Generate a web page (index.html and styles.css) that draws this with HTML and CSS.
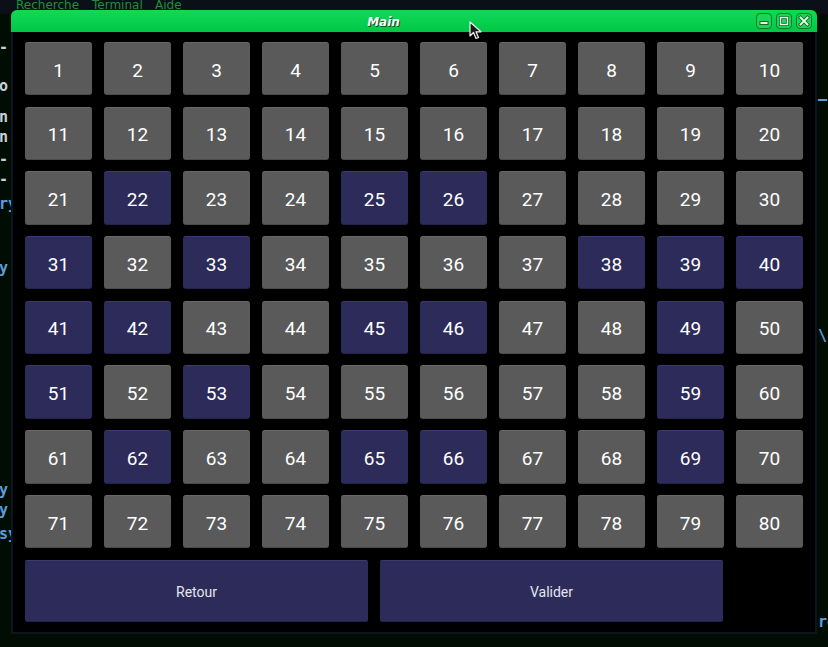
FILE: index.html
```html
<!DOCTYPE html>
<html lang="fr">
<head>
<meta charset="utf-8">
<title>Main</title>
<link rel="stylesheet" href="styles.css">
</head>
<body>
<div class="desktop">
  <div class="term-menu">
    <span class="m1">Recherche</span><span class="m2">Terminal</span><span class="m3">Aide</span>
  </div>
  <div class="term-text">
    <span class="tt w" style="top:38px">-</span>
    <span class="tt w" style="top:77px">o</span>
    <span class="tt w" style="top:108px">n</span>
    <span class="tt w" style="top:128px">n</span>
    <span class="tt w" style="top:150px">-</span>
    <span class="tt w" style="top:170px">-</span>
    <span class="tt b" style="top:195px">ry</span>
    <span class="tt b" style="top:259px">y</span>
    <span class="tt b" style="top:481px">y</span>
    <span class="tt b" style="top:501px">y</span>
    <span class="tt b" style="top:525px">sy</span>
    <span class="tt b right" style="top:90px">—</span>
    <span class="tt b right" style="top:327px">\'</span>
    <span class="tt b right" style="top:613px">ro</span>
  </div>

  <div class="window">
    <div class="titlebar">
      <div class="title">Main</div>
      <div class="wbtns">
        <div class="wbtn"><svg viewBox="0 0 16 16" width="16" height="16"><rect x="4" y="8.5" width="8" height="3" fill="#e8ffe8" stroke="#0b6e2a" stroke-width="1"/></svg></div>
        <div class="wbtn"><svg viewBox="0 0 16 16" width="16" height="16"><rect x="4.5" y="4.5" width="7" height="7" fill="none" stroke="#0b6e2a" stroke-width="3"/><rect x="4.5" y="4.5" width="7" height="7" fill="none" stroke="#e8ffe8" stroke-width="1.4"/></svg></div>
        <div class="wbtn"><svg viewBox="0 0 16 16" width="16" height="16"><path d="M4.5 4.5 L11.5 11.5 M11.5 4.5 L4.5 11.5" stroke="#0b6e2a" stroke-width="3.6" stroke-linecap="square"/><path d="M4.5 4.5 L11.5 11.5 M11.5 4.5 L4.5 11.5" stroke="#e8ffe8" stroke-width="1.8" stroke-linecap="square"/></svg></div>
      </div>
    </div>
    <div class="body">
      <div class="grid">
        <div class="cell">1</div><div class="cell">2</div><div class="cell">3</div><div class="cell">4</div><div class="cell">5</div><div class="cell">6</div><div class="cell">7</div><div class="cell">8</div><div class="cell">9</div><div class="cell">10</div>
        <div class="cell">11</div><div class="cell">12</div><div class="cell">13</div><div class="cell">14</div><div class="cell">15</div><div class="cell">16</div><div class="cell">17</div><div class="cell">18</div><div class="cell">19</div><div class="cell">20</div>
        <div class="cell">21</div><div class="cell sel">22</div><div class="cell">23</div><div class="cell">24</div><div class="cell sel">25</div><div class="cell sel">26</div><div class="cell">27</div><div class="cell">28</div><div class="cell">29</div><div class="cell">30</div>
        <div class="cell sel">31</div><div class="cell">32</div><div class="cell sel">33</div><div class="cell">34</div><div class="cell">35</div><div class="cell">36</div><div class="cell">37</div><div class="cell sel">38</div><div class="cell sel">39</div><div class="cell sel">40</div>
        <div class="cell sel">41</div><div class="cell sel">42</div><div class="cell">43</div><div class="cell">44</div><div class="cell sel">45</div><div class="cell sel">46</div><div class="cell">47</div><div class="cell">48</div><div class="cell sel">49</div><div class="cell">50</div>
        <div class="cell sel">51</div><div class="cell">52</div><div class="cell sel">53</div><div class="cell">54</div><div class="cell">55</div><div class="cell">56</div><div class="cell">57</div><div class="cell">58</div><div class="cell sel">59</div><div class="cell">60</div>
        <div class="cell">61</div><div class="cell sel">62</div><div class="cell">63</div><div class="cell">64</div><div class="cell sel">65</div><div class="cell sel">66</div><div class="cell">67</div><div class="cell">68</div><div class="cell sel">69</div><div class="cell">70</div>
        <div class="cell">71</div><div class="cell">72</div><div class="cell">73</div><div class="cell">74</div><div class="cell">75</div><div class="cell">76</div><div class="cell">77</div><div class="cell">78</div><div class="cell">79</div><div class="cell">80</div>
      </div>
      <div class="actions">
        <div class="action">Retour</div>
        <div class="action">Valider</div>
      </div>
    </div>
  </div>

  <svg class="cursor" width="14" height="20" viewBox="0 0 14 20"><path d="M1 1 L1 15 L4.5 11.5 L7 17.5 L9.5 16.5 L7 10.8 L12 10.8 Z" fill="#1a1a1a" stroke="#f2f2f2" stroke-width="1.2" stroke-linejoin="round"/></svg>
</div>
</body>
</html>
```

FILE: styles.css
```css
html, body {
  margin: 0;
  padding: 0;
}
body {
  width: 828px;
  height: 647px;
  overflow: hidden;
  background: #010d03;
}
.desktop {
  position: relative;
  width: 828px;
  height: 647px;
  background: #010d03;
  font-family: "DejaVu Sans", sans-serif;
}
.term-menu {
  height: 14px;
  background: #0a0f18;
  position: relative;
  font-size: 12px;
  line-height: 14px;
  color: #1e8f3c;
}
.term-menu span {
  position: absolute;
  top: -2px;
}
.m1 { left: 16px; }
.m2 { left: 92px; }
.m3 { left: 155px; }
.term-text .tt {
  position: absolute;
  left: -1px;
  font-family: "DejaVu Sans Mono", monospace;
  font-size: 15px;
  font-weight: bold;
  line-height: 18px;
}
.term-text .tt.right { left: 818px; }
.tt.w { color: #c8d0d8; }
.tt.b { color: #5a9fdc; }

.window {
  position: absolute;
  left: 11px;
  top: 10px;
  width: 806px;
}
.titlebar {
  height: 22px;
  border-radius: 6px 6px 0 0;
  background: linear-gradient(#12d858, #00c846);
  display: flex;
  align-items: center;
}
.title {
  flex: 1;
  text-align: center;
  font-family: "DejaVu Sans", sans-serif;
  font-weight: bold;
  font-style: italic;
  font-size: 12px;
  color: #ffffff;
  text-shadow: 1px 1px 0 #0a4a20;
  padding-top: 1px;
}
.wbtns {
  display: flex;
  gap: 4px;
  padding-right: 5px;
}
.wbtn {
  width: 16px;
  height: 16px;
  box-sizing: border-box;
  border: 1px solid #0b7a2e;
  border-radius: 4px;
  background: #1cd455;
  display: flex;
  align-items: center;
  justify-content: center;
  overflow: hidden;
}
.wbtn svg { display: block; flex: none; }
.body {
  background: #000;
  border: 2px solid #0c1322;
  border-top: none;
  padding: 10px 12px 10.4px;
  display: flex;
  flex-direction: column;
  gap: 11.3px;
}
.grid {
  display: grid;
  grid-template-columns: repeat(10, 67px);
  grid-auto-rows: 53.4px;
  column-gap: 12px;
  row-gap: 11.3px;
}
.cell {
  background: #5a5a5a;
  border-radius: 3px;
  border-top: 1px solid #686868;
  border-bottom: 1px solid #4a4a4a;
  box-sizing: border-box;
  padding-top: 3px;
  display: flex;
  align-items: center;
  justify-content: center;
  font-family: Roboto, "Liberation Sans", sans-serif;
  font-size: 19px;
  color: #ffffff;
}
.cell.sel {
  background: #2c2b59;
  border-top-color: #3a3970;
  border-bottom-color: #22224a;
}
.actions {
  display: flex;
  gap: 12px;
}
.action {
  width: 343px;
  height: 62px;
  box-sizing: border-box;
  background: #2c2b59;
  border-radius: 2px;
  border-top: 1px solid #3a3970;
  border-bottom: 1px solid #22224a;
  padding-top: 2px;
  display: flex;
  align-items: center;
  justify-content: center;
  font-family: Roboto, "Liberation Sans", sans-serif;
  font-size: 14px;
  color: #e6e6ee;
}
.cursor {
  position: absolute;
  left: 469px;
  top: 21px;
}
```
